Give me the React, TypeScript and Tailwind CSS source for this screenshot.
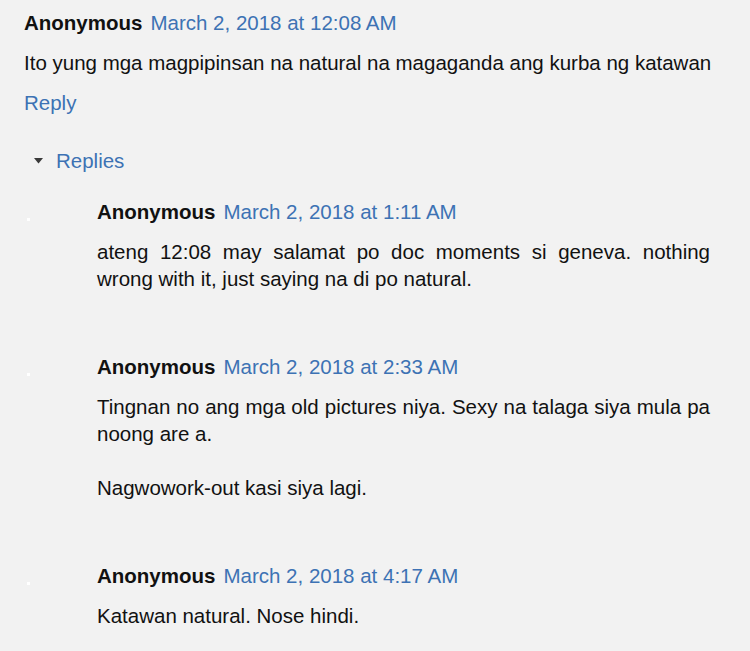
import React from "react";

const font = { fontFamily: '"Liberation Sans", Arial, sans-serif' };

function Header({ date }: { date: string }) {
  return (
    <div className="flex items-baseline leading-[27px]">
      <span className="font-bold text-[#111]">Anonymous</span>
      <span className="ml-[8px] text-[#3d72b4]">{date}</span>
    </div>
  );
}

function ReplyItem({
  date,
  children,
  first,
}: {
  date: string;
  children: React.ReactNode;
  first?: boolean;
}) {
  return (
    <div className={"flex " + (first ? "mt-[24px]" : "mt-[61px]")}>
      <div className="w-[73px] shrink-0">
        <div className="ml-[3px] mt-[20px] h-[3px] w-[3px] bg-white" />
      </div>
      <div className="w-[613px]">
        <Header date={date} />
        <div className="mt-[13px] text-justify leading-[27px] text-[#111]">{children}</div>
      </div>
    </div>
  );
}

export default function App() {
  return (
    <div
      className="min-h-[651px] w-[750px] overflow-hidden bg-[#f2f2f2] pl-[24px] pt-[9px] text-[20.5px]"
      style={font}
    >
      <div className="w-[686px]">
        <Header date="March 2, 2018 at 12:08 AM" />
        <div className="mt-[13px] whitespace-nowrap leading-[27px] text-[#111]">
          Ito yung mga magpipinsan na natural na magaganda ang kurba ng katawan
        </div>
        <div className="mt-[13px] leading-[27px] text-[#3d72b4]">Reply</div>
        <div className="mt-[31px] flex items-center leading-[27px]">
          <svg width="9" height="6" viewBox="0 0 9 6" className="ml-[10px]">
            <polygon points="0,0 9,0 4.5,5.5" fill="#3a3a3a" />
          </svg>
          <span className="ml-[13px] text-[#3d72b4]">Replies</span>
        </div>
        <ReplyItem first date="March 2, 2018 at 1:11 AM">
          ateng 12:08 may salamat po doc moments si geneva. nothing wrong with it, just saying na di
          po natural.
        </ReplyItem>
        <ReplyItem date="March 2, 2018 at 2:33 AM">
          Tingnan no ang mga old pictures niya. Sexy na talaga siya mula pa noong are a.
          <br />
          <br />
          Nagwowork-out kasi siya lagi.
        </ReplyItem>
        <ReplyItem date="March 2, 2018 at 4:17 AM">Katawan natural. Nose hindi.</ReplyItem>
      </div>
    </div>
  );
}
